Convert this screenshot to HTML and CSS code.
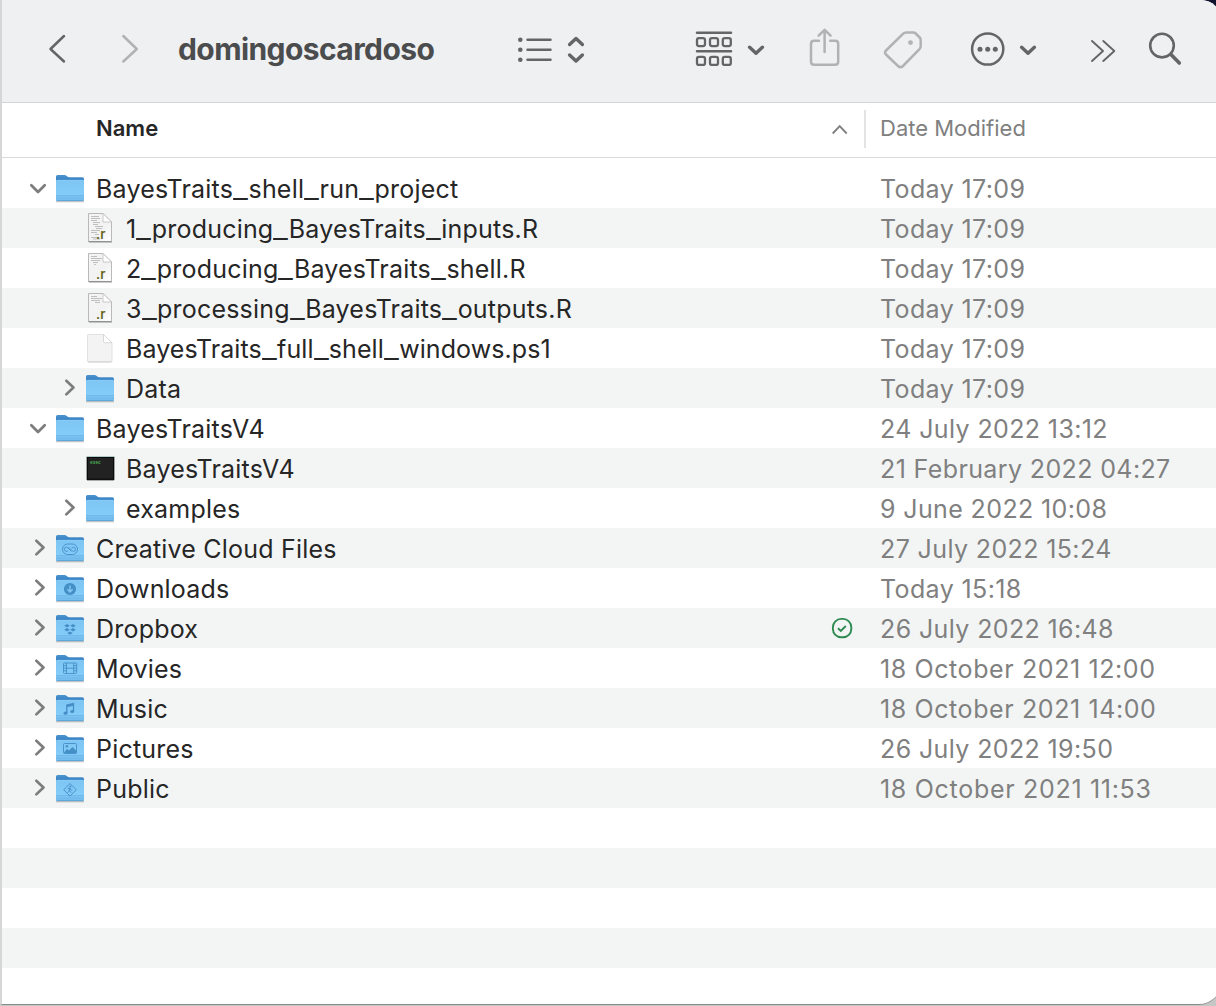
FILE: index.html
```
<!DOCTYPE html>
<html lang="en">
<head>
<meta charset="utf-8">
<title>domingoscardoso</title>
<link rel="stylesheet" href="styles.css">
</head>
<body>
<svg class="defs" width="0" height="0">
  <defs>
    <linearGradient id="front" x1="0" y1="0" x2="0" y2="1">
      <stop offset="0" stop-color="#7ec5f3"/><stop offset=".75" stop-color="#83ccfa"/><stop offset="1" stop-color="#6fb9ea"/>
    </linearGradient>
    <linearGradient id="back" x1="0" y1="0" x2="0" y2="1">
      <stop offset="0" stop-color="#4a94cf"/><stop offset="1" stop-color="#2a70b8"/>
    </linearGradient>
    <linearGradient id="paper" x1="0" y1="0" x2="1" y2="1">
      <stop offset="0" stop-color="#f5f5f5"/><stop offset=".6" stop-color="#f2f2f2"/><stop offset="1" stop-color="#fff"/>
    </linearGradient>
    <symbol id="folder" viewBox="0 0 32 32">
      <path d="M2 28.600h28" stroke="#000" stroke-opacity=".22" stroke-width="1.400"/>
      <path d="M2 12V3.600q0-1.600 1.600-1.600h7q1 0 1.800.8l1 .8q.8.700 1.900.700H28.400q1.600 0 1.600 1.600V12z" fill="url(#back)"/>
      <path d="M2 8q0-1 1-1h26q1 0 1 1v18.500q0 1.500-1.500 1.500h-25Q2 28 2 26.500z" fill="url(#front)"/>
      <path d="M2.500 7.300h27" stroke="#91d3fb" stroke-width=".6"/>
      <path d="M2 22.800h28" stroke="#5ba6da" stroke-width=".7"/>
      <path d="M2 25h28" stroke="#66afe1" stroke-width=".7"/>
      <path d="M2.500 27.600h27" stroke="#559fd3" stroke-width=".8"/>
    </symbol>
    <symbol id="doc" viewBox="0 0 32 32">
      <path d="M5 29.500h23" stroke="#000" stroke-opacity=".2"/>
      <path d="M4.500 0.500h14.500l8.500 8.500v19.500h-23z" fill="url(#paper)" stroke="#b9b9b9"/>
      <path d="M4.500 28.500h23" stroke="#929292"/>
      <path d="M19 .5v8.500h8.500z" fill="#fff" stroke="#bdbdbd" stroke-width=".8"/>
    </symbol>
    <symbol id="blank" viewBox="0 0 32 32">
      <path d="M4.500 1.500h14.500l9 8.500v18q0 .8-.8.800H4.300q-.8 0-.8-.8V2.500q0-1 1-1z" fill="#f3f3f3" stroke="#dadada" stroke-width=".8"/>
      <path d="M19.500 1.500v7.200q0 1 1 1h7.500z" fill="#fff" stroke="#cfcfcf" stroke-width=".8"/>
      <path d="M4 29h23.500" stroke="#c2c2c2" stroke-width=".7"/>
    </symbol>
    <symbol id="open" viewBox="0 0 24 24"><path d="M3.300 9.200l6.700 6.800 6.700-6.800" fill="none" stroke="#7d7d7d" stroke-width="2.700" stroke-linecap="round" stroke-linejoin="round"/></symbol>
    <symbol id="closed" viewBox="0 0 24 24"><path d="M8.300 4.800l7.200 6.700-7.200 6.900" fill="none" stroke="#7d7d7d" stroke-width="2.700" stroke-linecap="round" stroke-linejoin="round"/></symbol>
  </defs>
</svg>

<div class="window">
  <header class="toolbar">
    <svg class="tool back" width="22" height="48" viewBox="46 26 22 48"><path d="M64 36L50.500 49 64 61.500"/></svg>
    <svg class="tool forward dim" width="22" height="48" viewBox="119 26 22 48"><path d="M123.300 36L136.800 49l-13.500 12.500"/></svg>
    <h1 class="title">domingoscardoso</h1>
    <svg class="tool list" width="40" height="48" viewBox="515 26 40 48"><path d="M527.500 39.800h23M527.500 49.800h23M527.500 59.800h23"/><g class="dot"><circle cx="520.300" cy="39.800" r="2.300"/><circle cx="520.300" cy="49.800" r="2.300"/><circle cx="520.300" cy="59.800" r="2.300"/></g></svg>
    <svg class="tool sort heavy" width="22" height="48" viewBox="565 26 22 48"><path d="M569.600 44.500l6.400-6 6.400 6M569.600 55l6.400 6 6.400-6"/></svg>
    <svg class="tool group" width="42" height="48" viewBox="693 26 42 48"><path d="M697 32.700h34M697 51.300h34"/><g stroke-width="2.300"><rect x="697" y="38.100" width="8" height="8" rx="2"/><rect x="710" y="38.100" width="8" height="8" rx="2"/><rect x="722.800" y="38.100" width="8" height="8" rx="2"/><rect x="697" y="56.900" width="8" height="8" rx="2"/><rect x="710" y="56.900" width="8" height="8" rx="2"/><rect x="722.800" y="56.900" width="8" height="8" rx="2"/></g></svg>
    <svg class="tool drop heavy" width="22" height="48" viewBox="745 26 22 48"><path d="M749.600 47.200l6.400 6 6.400-6"/></svg>
    <svg class="tool share dim" width="36" height="48" viewBox="807 26 36 48"><path d="M819 40.800h-5q-3 0-3 3v18q0 3 3 3h21.200q3 0 3-3v-18q0-3-3-3h-5M824.600 52V30.500M818.600 35.700l6-5.800 6 5.800"/></svg>
    <svg class="tool tag dim" width="42" height="48" viewBox="882 26 42 48"><path d="M886 50.500l17.200-16.800q1.300-1.200 3-1.200h7q1.500 0 2.500 1l4 4q1 1 1 2.500v6q0 2-1.200 3.200L903 66q-2.500 2.300-5 0L886 54.500q-2-2 0-4z"/><g class="dot"><circle cx="910.500" cy="42.600" r="2.400"/></g></svg>
    <svg class="tool more" width="38" height="48" viewBox="969 26 38 48"><circle cx="987.700" cy="49" r="15.600"/><g class="dot"><circle cx="980" cy="49.300" r="2.500"/><circle cx="987.700" cy="49.300" r="2.500"/><circle cx="995.300" cy="49.300" r="2.500"/></g></svg>
    <svg class="tool drop2 heavy" width="22" height="48" viewBox="1017 26 22 48"><path d="M1021.600 47.200l6.400 6 6.400-6"/></svg>
    <svg class="tool overflow" width="30" height="48" viewBox="1088 26 30 48"><path d="M1092 41l11 10-11 10M1103.300 41l11 10-11 10" stroke-width="1.900"/></svg>
    <svg class="tool search" width="38" height="48" viewBox="1146 26 38 48"><circle cx="1162" cy="45.600" r="11.800" stroke-width="2.600"/><path d="M1171 54.500l8.300 8.500" stroke-width="3.600"/></svg>
  </header>

  <div class="columns">
    <span class="col-name">Name</span>
    <svg class="asc" width="18" height="12" viewBox="0 0 18 12"><path d="M1.700 9.500l7-7.300 7 7.300" fill="none" stroke="#808080" stroke-width="1.900"/></svg>
    <span class="col-date">Date Modified</span>
  </div>

  <main class="files">
    <div class="row"><svg class="twisty"><use href="#open"/></svg><svg class="icon"><use href="#folder"/></svg><span class="name">BayesTraits<i>_</i>shell<i>_</i>run<i>_</i>project</span><span class="date">Today 17:09</span></div>
    <div class="row child"><svg class="icon"><use href="#doc"/><path d="M7 3.500h8M7 5.500h9M7 7.500h6M9 9.500h7M9 11.500h5M11 13.500h8M12 15.500h6M7 17.500h9M7 19.500h6M11 21.500h4M7 24.500h7M9 26h7" stroke="#b9b9b9" stroke-width=".9"/><text class="ext" x="12" y="25.500">.r</text></svg><span class="name">1<i>_</i>producing<i>_</i>BayesTraits<i>_</i>inputs.R</span><span class="date">Today 17:09</span></div>
    <div class="row child"><svg class="icon"><use href="#doc"/><path d="M7 3.500h6M7 5.500h11M7 7.500h9M9 9.500h5M10 11.500h2" stroke="#b9b9b9" stroke-width=".9"/><text class="ext" x="12" y="25.500">.r</text></svg><span class="name">2<i>_</i>producing<i>_</i>BayesTraits<i>_</i>shell.R</span><span class="date">Today 17:09</span></div>
    <div class="row child"><svg class="icon"><use href="#doc"/><path d="M7 3.500h6M7 5.500h11M7 7.500h9M11 9.500h5" stroke="#b9b9b9" stroke-width=".9"/><text class="ext" x="12" y="25.500">.r</text></svg><span class="name">3<i>_</i>processing<i>_</i>BayesTraits<i>_</i>outputs.R</span><span class="date">Today 17:09</span></div>
    <div class="row child"><svg class="icon"><use href="#blank"/></svg><span class="name snug">BayesTraits<i>_</i>full<i>_</i>shell<i>_</i>windows.ps1</span><span class="date">Today 17:09</span></div>
    <div class="row child"><svg class="twisty"><use href="#closed"/></svg><svg class="icon"><use href="#folder"/></svg><span class="name">Data</span><span class="date">Today 17:09</span></div>
    <div class="row"><svg class="twisty"><use href="#open"/></svg><svg class="icon"><use href="#folder"/></svg><span class="name">BayesTraitsV4</span><span class="date">24 July 2022 13:12</span></div>
    <div class="row child"><svg class="icon"><path d="M3 27.500h27" stroke="#aaa"/><rect x="3.300" y="4.300" width="26.400" height="22" fill="#222" stroke="#080808" stroke-width="1.300"/><path d="M2.600 3.500h27.800" stroke="#b9dcdd" stroke-width=".7"/><text class="exec" x="6" y="10.500">exec</text></svg><span class="name">BayesTraitsV4</span><span class="date">21 February 2022 04:27</span></div>
    <div class="row child"><svg class="twisty"><use href="#closed"/></svg><svg class="icon"><use href="#folder"/></svg><span class="name">examples</span><span class="date">9 June 2022 10:08</span></div>
    <div class="row"><svg class="twisty"><use href="#closed"/></svg><svg class="icon"><use href="#folder"/><g class="glyph"><rect x="8.500" y="11" width="15" height="10.500" rx="5.200"/><path d="M17.500 18.500l-4-4q-1.500-1-2.600.2-1.200 1.800.2 3.200 1.500 1.200 3 0M14.500 14l4 4q1.400 1 2.500-.2 1.200-1.700-.2-3-1.300-1.200-3.300.2"/></g></svg><span class="name">Creative Cloud Files</span><span class="date">27 July 2022 15:24</span></div>
    <div class="row"><svg class="twisty"><use href="#closed"/></svg><svg class="icon"><use href="#folder"/><circle cx="16" cy="16" r="6.100" fill="#438fc6"/><path d="M16 12.500v6M13.300 16.300l2.700 2.700 2.700-2.700" fill="none" stroke="#83c8f5" stroke-width="1.400"/></svg><span class="name">Downloads</span><span class="date">Today 15:18</span></div>
    <div class="row"><svg class="twisty"><use href="#closed"/></svg><svg class="icon"><use href="#folder"/><path d="M13 11l2.800 1.800-2.800 1.800-2.800-1.800zM19 11l2.800 1.800-2.800 1.800-2.800-1.800zM13 14.900l2.800 1.800-2.800 1.800-2.800-1.800zM19 14.900l2.800 1.800-2.800 1.800-2.800-1.800zM16 18.400l2.800 1.600-2.800 1.800-2.800-1.800z" fill="#438fc6"/></svg><span class="name">Dropbox</span><svg class="synced" width="22" height="22" viewBox="0 0 22 22"><rect x="1.900" y="1.900" width="18.400" height="18.400" rx="8.300"/><path d="M7 11.300l2.800 2.700 5-5"/></svg><span class="date">26 July 2022 16:48</span></div>
    <div class="row"><svg class="twisty"><use href="#closed"/></svg><svg class="icon"><use href="#folder"/><g class="glyph"><rect x="9.500" y="10" width="13.200" height="10.500" rx="1"/><path d="M12.500 10v10.500M19.700 10v10.500M12.500 15.200h7.200M9.500 12.600h3M9.500 15.200h3M9.500 17.800h3M19.700 12.600h3M19.700 15.200h3M19.700 17.800h3"/></g></svg><span class="name">Movies</span><span class="date wide">18 October 2021 12:00</span></div>
    <div class="row"><svg class="twisty"><use href="#closed"/></svg><svg class="icon"><use href="#folder"/><path d="M12.800 20v-8l6.700-1.500v7.800M12.800 13.500l6.700-1.500" fill="none" stroke="#438fc6" stroke-width="1.300"/><g fill="#438fc6"><ellipse cx="11.500" cy="20.200" rx="2" ry="1.600"/><ellipse cx="18.200" cy="18.500" rx="2" ry="1.600"/></g></svg><span class="name">Music</span><span class="date wide">18 October 2021 14:00</span></div>
    <div class="row"><svg class="twisty"><use href="#closed"/></svg><svg class="icon"><use href="#folder"/><g class="glyph"><rect x="9.500" y="10.500" width="13" height="10" rx="1"/></g><path d="M10 19.500l3-3.500 2 1.500 3.500-3.500 4 4v2.300h-12.500z" fill="#438fc6"/><circle cx="12.900" cy="13.300" r="1.200" fill="#438fc6"/></svg><span class="name">Pictures</span><span class="date">26 July 2022 19:50</span></div>
    <div class="row"><svg class="twisty"><use href="#closed"/></svg><svg class="icon"><use href="#folder"/><g class="glyph"><path d="M16 10.500l6.300 6.300-6.300 6.300-6.300-6.300zM13.700 16l1.900-1.200 1 2 1.800.3M15.600 15l-.3 3-1.800 1.800M15.500 17.700l1.800 2.200"/></g><circle cx="16.400" cy="13.500" r=".9" fill="#438fc6"/></svg><span class="name">Public</span><span class="date wider">18 October 2021 11:53</span></div>
    <div class="row"></div>
    <div class="row"></div>
    <div class="row"></div>
    <div class="row"></div>
    <div class="row"></div>
  </main>
</div>
</body>
</html>
```

FILE: styles.css
```
html {
  height: 100%;
  overflow: hidden;
}

body {
  box-sizing: border-box;
  height: 1006px;
  margin: 0;
  overflow: hidden;
  background: linear-gradient(#10142c 0 50px, #c6c6c6 50px);
  font-family: Inter, "Liberation Sans", sans-serif;
}

.defs {
  position: absolute;
}

.window {
  box-sizing: border-box;
  width: 1221px;
  height: 1005px;
  overflow: hidden;
  border-left: 2px solid #d6d6d6;
  border-bottom: 1px solid #8b8b8b;
  border-radius: 0 20px 22px 0;
  background: #fff;
}

.toolbar {
  display: flex;
  box-sizing: border-box;
  height: 103px;
  padding: 26px 0 0 44px;
  border-bottom: 1px solid #d4d4d5;
  background: #eff0f2;
}

.tool {
  flex: none;
  fill: none;
  stroke: #646567;
  stroke-width: 2.5;
  stroke-linecap: round;
  stroke-linejoin: round;
}

.dim { stroke: #b1b2b4; }
.heavy { stroke-width: 3.4; }
.dot { fill: #646567; stroke: none; }
.dim .dot { fill: #b1b2b4; }

.forward { margin-left: 51px; }
.list { margin-left: 80px; }
.sort { margin-left: 10px; }
.group { margin-left: 106px; }
.drop { margin-left: 10px; }
.share { margin-left: 40px; }
.tag { margin-left: 39px; }
.more { margin-left: 45px; }
.drop2 { margin-left: 10px; }
.overflow { margin-left: 49px; }
.search { margin-left: 28px; }

.title {
  flex: none;
  width: 257px;
  margin: 0 0 0 37px;
  color: #4b4c4d;
  font-size: 30px;
  font-weight: 700;
  line-height: 47px;
  letter-spacing: -0.58px;
}

.columns {
  display: flex;
  align-items: center;
  box-sizing: border-box;
  height: 54.5px;
  padding-left: 94px;
  border-bottom: 1px solid #dadada;
  font-size: 22px;
}

.col-name {
  width: 735px;
  padding-bottom: 3px;
  color: #262626;
  font-weight: 600;
}

.asc { flex: none; }

.col-date {
  box-sizing: border-box;
  height: 38px;
  margin: 0 0 1px 15px;
  padding-left: 14px;
  border-left: 2px solid #e3e3e3;
  color: #808080;
  line-height: 37px;
}

.files {
  padding-top: 10.5px;
}

.row {
  display: flex;
  align-items: center;
  height: 40px;
  padding-left: 94px;
  font-size: 25px;
  line-height: 40px;
  white-space: nowrap;
}

.row:nth-child(even) { background: #f3f5f5; }
.child { padding-left: 124px; }

.twisty {
  flex: none;
  width: 24px;
  height: 24px;
  margin: 0 2px 0 -68px;
}

.icon {
  flex: none;
  width: 32px;
  height: 32px;
  margin: 2px 10px 0 0;
}

.icon:first-child { margin-left: -42px; }

.name {
  flex: 1;
  padding-top: 1px;
  color: #262626;
  letter-spacing: 0.2px;
}

/* Stretched underscores, as wide as the system font draws them. */
.name i {
  display: inline-block;
  margin-right: 3.8px;
  font-style: normal;
  transform: scaleX(1.3);
  transform-origin: left;
}

.snug { letter-spacing: 0.08px; }

.date {
  width: 341px;
  padding-top: 1px;
  color: #808080;
  letter-spacing: 0.38px;
}

.wide { letter-spacing: 0.6px; }
.wider { letter-spacing: 0.7px; }

.glyph {
  fill: none;
  stroke: #438fc6;
  stroke-width: 0.9;
}

.ext {
  fill: #66651b;
  font: 600 13px Inter, sans-serif;
  letter-spacing: 0;
}

.exec {
  fill: #4cae55;
  font: 700 4.5px "Liberation Mono", monospace;
}

.synced {
  flex: none;
  margin-right: 27px;
  fill: none;
  stroke: #2e8b50;
  stroke-width: 1.9;
}
```
